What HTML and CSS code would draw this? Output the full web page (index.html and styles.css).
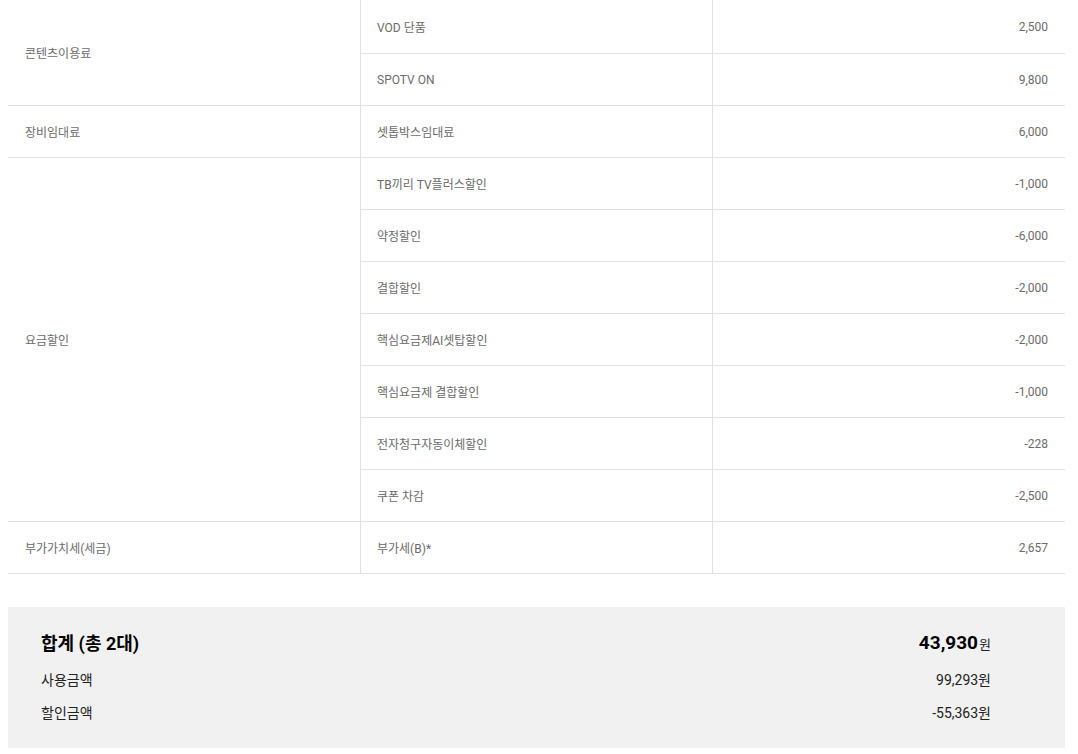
FILE: index.html
```html
<!DOCTYPE html>
<html lang="ko">
<head>
<meta charset="utf-8">
<title>요금 상세</title>
<link rel="stylesheet" href="styles.css">
</head>
<body>
<div class="page">
  <table class="bill">
    <colgroup><col class="c1"><col class="c2"><col class="c3"></colgroup>
    <tbody>
      <tr class="first"><td class="cat" rowspan="2">콘텐츠이용료</td><td class="item">VOD 단품</td><td class="amt">2,500</td></tr>
      <tr><td class="item">SPOTV ON</td><td class="amt">9,800</td></tr>
      <tr><td class="cat">장비임대료</td><td class="item">셋톱박스임대료</td><td class="amt">6,000</td></tr>
      <tr><td class="cat" rowspan="7">요금할인</td><td class="item">TB끼리 TV플러스할인</td><td class="amt">-1,000</td></tr>
      <tr><td class="item">약정할인</td><td class="amt">-6,000</td></tr>
      <tr><td class="item">결합할인</td><td class="amt">-2,000</td></tr>
      <tr><td class="item">핵심요금제AI셋탑할인</td><td class="amt">-2,000</td></tr>
      <tr><td class="item">핵심요금제 결합할인</td><td class="amt">-1,000</td></tr>
      <tr><td class="item">전자청구자동이체할인</td><td class="amt">-228</td></tr>
      <tr><td class="item">쿠폰 차감</td><td class="amt">-2,500</td></tr>
      <tr><td class="cat">부가가치세(세금)</td><td class="item">부가세(B)*</td><td class="amt">2,657</td></tr>
    </tbody>
  </table>

  <div class="summary">
    <div class="sum-title">합계 (총 2대)</div>
    <div class="sum-total"><strong>43,930</strong><span class="won">원</span></div>
    <div class="sum-label">사용금액</div>
    <div class="sum-value">99,293원</div>
    <div class="sum-label">할인금액</div>
    <div class="sum-value">-55,363원</div>
  </div>
</div>
</body>
</html>
```

FILE: styles.css
```css
* { box-sizing: border-box; }
html, body { margin: 0; padding: 0; background: #fff; }
body {
  font-family: Roboto, "Noto Sans CJK KR", "Noto Sans", sans-serif;
  color: #222;
}
.page {
  padding: 0 13px 0 8px;
}
.bill {
  width: 100%;
  border-collapse: separate;
  border-spacing: 0;
  table-layout: fixed;
}
.bill col.c1 { width: 352px; }
.bill col.c2 { width: 352px; }
.bill td {
  height: 52px;
  padding: 0 17px;
  font-size: 12px;
  color: #6b6b6b;
  border-bottom: 1px solid #e2e2e2;
  vertical-align: middle;
  white-space: nowrap;
}
.bill tr.first td { height: 54px; }
.bill td.item,
.bill td.amt { border-left: 1px solid #e2e2e2; }
.bill td.item { padding-left: 16px; }
.bill td.amt { text-align: right; }

.summary {
  margin-top: 33px;
  background: #f1f1f1;
  padding: 24px 74px 25px 33px;
  display: grid;
  grid-template-columns: 1fr auto;
  align-items: center;
  row-gap: 13px;
}
.sum-title {
  font-size: 18px;
  font-weight: 700;
  color: #000;
  line-height: 24px;
}
.sum-total {
  text-align: right;
  line-height: 24px;
  color: #000;
}
.sum-total strong { font-size: 19px; font-weight: 700; }
.sum-total .won { font-size: 13px; color: #222; margin-left: 1px; }
.sum-label,
.sum-value {
  font-size: 14px;
  line-height: 20px;
  color: #222;
}
.sum-value { text-align: right; }
```
